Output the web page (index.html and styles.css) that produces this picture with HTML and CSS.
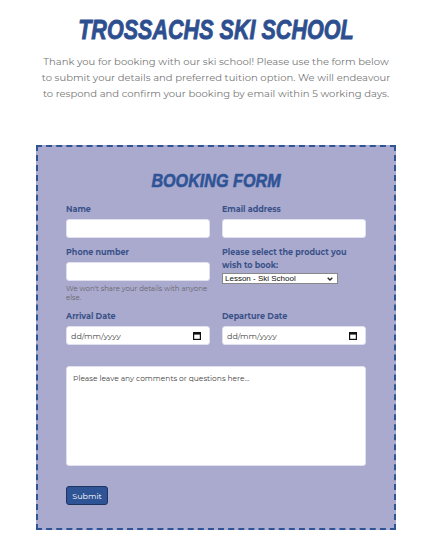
FILE: index.html
```html
<!DOCTYPE html>
<html>
<head>
<meta charset="utf-8">
<link rel="stylesheet" href="styles.css">
</head>
<body>
<div class="page">
  <h1 class="title"><span class="squeeze">TROSSACHS SKI SCHOOL</span></h1>
  <p class="intro">Thank you for booking with our ski school! Please use the form below<br>to submit your details and preferred tuition option. We will endeavour<br>to respond and confirm your booking by email within 5 working days.</p>
  <form class="booking">
    <h2 class="form-title"><span class="squeeze2">BOOKING FORM</span></h2>
    <div class="grid">
      <div class="field">
        <label>Name</label>
        <input type="text" class="text-input">
      </div>
      <div class="field">
        <label>Email address</label>
        <input type="text" class="text-input">
      </div>
      <div class="field">
        <label>Phone number</label>
        <input type="text" class="text-input">
        <small class="hint">We won't share your details with anyone else.</small>
      </div>
      <div class="field">
        <label>Please select the product you wish to book:</label>
        <div class="select-wrap">
          <select class="select"><option>Lesson - Ski School</option></select>
          <svg class="chev" width="6" height="4" viewBox="0 0 6 4"><path d="M0.7 0.7 L3 3 L5.3 0.7" fill="none" stroke="#222" stroke-width="1.3"/></svg>
        </div>
      </div>
      <div class="field">
        <label>Arrival Date</label>
        <div class="date-wrap">
          <input type="text" class="text-input" placeholder="dd/mm/yyyy">
          <svg class="cal" width="8" height="8" viewBox="0 0 8 8"><rect x="0.6" y="0.6" width="6.8" height="6.8" fill="none" stroke="#111" stroke-width="1.2"/><rect x="0.6" y="0.6" width="6.8" height="2" fill="#111"/></svg>
        </div>
      </div>
      <div class="field">
        <label>Departure Date</label>
        <div class="date-wrap">
          <input type="text" class="text-input" placeholder="dd/mm/yyyy">
          <svg class="cal" width="8" height="8" viewBox="0 0 8 8"><rect x="0.6" y="0.6" width="6.8" height="6.8" fill="none" stroke="#111" stroke-width="1.2"/><rect x="0.6" y="0.6" width="6.8" height="2" fill="#111"/></svg>
        </div>
      </div>
    </div>
    <textarea class="comments" placeholder="Please leave any comments or questions here..."></textarea>
    <button type="button" class="submit">Submit</button>
  </form>
</div>
</body>
</html>
```
FILE: styles.css
```css
* { box-sizing: border-box; }
body {
  margin: 0;
  background: #fff;
  font-family: "Montserrat", "Open Sans", "DejaVu Sans", sans-serif;
}
.page {
  width: 360px;
  margin-left: 36px;
  padding-top: 12px;
}
.title {
  margin: 0;
  text-align: center;
  font-family: "Liberation Sans", sans-serif;
  font-weight: 700;
  font-style: italic;
  font-size: 28px;
  line-height: 36px;
  color: #2e4f8f;
  white-space: nowrap;
}
.squeeze {
  display: inline-block;
  transform: scaleX(0.77);
  -webkit-text-stroke: 0.9px #2e4f8f;
}
.intro {
  margin: 6px -20px 0;
  text-align: center;
  font-size: 10px;
  line-height: 16px;
  color: #777;
  white-space: nowrap;
}
.booking {
  margin-top: 43px;
  background: #aaaacf;
  border: 2px dashed #2f5496;
  padding: 22px 28px 23px;
}
.form-title {
  margin: 0 0 10px;
  text-align: center;
  font-family: "Liberation Sans", sans-serif;
  font-weight: 700;
  font-style: italic;
  font-size: 19px;
  line-height: 24px;
  color: #2f5496;
  white-space: nowrap;
}
.squeeze2 {
  display: inline-block;
  transform: scaleX(0.85);
  -webkit-text-stroke: 0.6px #2f5496;
}
.grid {
  display: grid;
  grid-template-columns: 144px 144px;
  column-gap: 12px;
  row-gap: 8px;
}
.field {
  display: flex;
  flex-direction: column;
  align-items: flex-start;
}
label {
  font-size: 8px;
  font-weight: 700;
  line-height: 13px;
  color: #3a5288;
  margin-bottom: 3px;
}
.text-input {
  display: block;
  width: 144px;
  height: 19px;
  border: 1px solid #e0e0ee;
  border-radius: 3px;
  background: #fff;
  font-family: "Montserrat", "Open Sans", sans-serif;
  font-size: 8px;
  padding: 0 4px;
  color: #444;
}
.text-input::placeholder { color: #444; }
.date-wrap {
  position: relative;
  width: 144px;
}
.cal {
  position: absolute;
  right: 9px;
  top: 6px;
}
.hint {
  margin-top: 3px;
  max-width: 144px;
  font-size: 7px;
  line-height: 9px;
  color: #666;
}
.select-wrap {
  position: relative;
  width: 116px;
  margin-top: -2px;
}
.select {
  display: block;
  -webkit-appearance: none;
  appearance: none;
  height: 11px;
  width: 116px;
  font-family: "Liberation Sans", sans-serif;
  font-size: 8px;
  line-height: 9px;
  padding: 0 0 0 2px;
  border: 1px solid #888;
  border-radius: 0;
  background: #fff;
  color: #111;
}
.chev {
  position: absolute;
  right: 5px;
  top: 4px;
}
.comments {
  display: block;
  width: 300px;
  height: 100px;
  margin-top: 21px;
  border: 1px solid #e0e0ee;
  border-radius: 3px;
  padding: 7px 6px;
  resize: none;
  font-family: "Montserrat", "Open Sans", sans-serif;
  font-size: 7.5px;
}
.comments::placeholder { color: #444; }
.submit {
  display: block;
  margin-top: 20px;
  height: 19px;
  width: 42px;
  padding: 0;
  background: #2f5496;
  color: #fff;
  border: 1px solid #1e3460;
  border-radius: 3px;
  font-family: "Montserrat", "Open Sans", sans-serif;
  font-size: 8px;
}
```
